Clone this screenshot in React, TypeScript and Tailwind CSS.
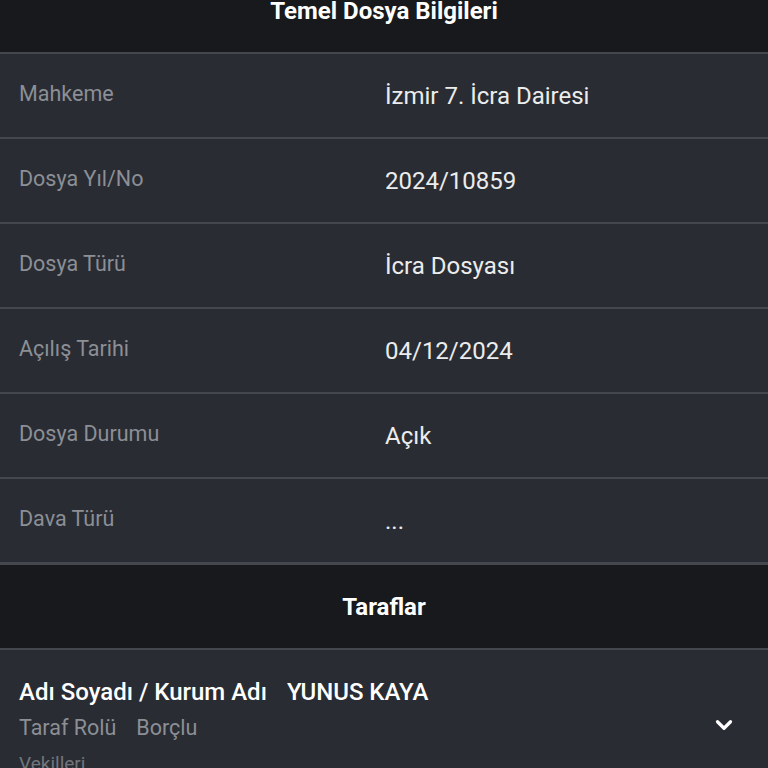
import { ChevronDown } from "lucide-react";

const rows = [
  { label: "Mahkeme", value: "İzmir 7. İcra Dairesi" },
  { label: "Dosya Yıl/No", value: "2024/10859" },
  { label: "Dosya Türü", value: "İcra Dosyası" },
  { label: "Açılış Tarihi", value: "04/12/2024" },
  { label: "Dosya Durumu", value: "Açık" },
  { label: "Dava Türü", value: "..." },
];

export default function App() {
  return (
    <div className="h-[768px] w-[768px] overflow-hidden bg-[#292c33] font-['Roboto',sans-serif]">
      {/* section header, scrolled partly out of view */}
      <div className="flex h-[52px] justify-center bg-[#18191c]">
        <h2 className="text-[24px] font-bold leading-[23px] text-white">Temel Dosya Bilgileri</h2>
      </div>

      {rows.map((r, i) => (
        <div
          key={r.label}
          className={`grid grid-cols-2 items-center border-t-2 border-[#44474d] bg-[#292c33] ${
            i === rows.length - 1 ? "h-[88px] border-b-[3px]" : "h-[85px]"
          }`}
        >
          <span className="-mt-[3px] pl-[19px] text-[21.5px] text-[#8c8f95]">{r.label}</span>
          <span className="pl-px text-[24px] text-[#ececec]">{r.value}</span>
        </div>
      ))}

      <div className="flex h-[83px] items-center justify-center bg-[#18191c]">
        <h2 className="text-[24px] font-bold text-white">Taraflar</h2>
      </div>

      <div className="border-t-2 border-[#44474d] bg-[#292c33] pl-[19px] pr-[31px] pt-[27px]">
        <div className="flex items-center justify-between">
          <div>
            <div className="flex gap-[20px] text-[24px] font-medium leading-[30px] text-white">
              <span>Adı Soyadı / Kurum Adı</span>
              <span>YUNUS KAYA</span>
            </div>
            <div className="mt-[7px] flex gap-[20px] text-[21.5px] leading-[28px] text-[#8c8f95]">
              <span>Taraf Rolü</span>
              <span>Borçlu</span>
            </div>
          </div>
          <ChevronDown className="mt-[30px] h-[26px] w-[26px] text-white" strokeWidth={3} />
        </div>
        <div className="mt-[8px] text-[19px] text-[#72757b]">Vekilleri</div>
      </div>
    </div>
  );
}
